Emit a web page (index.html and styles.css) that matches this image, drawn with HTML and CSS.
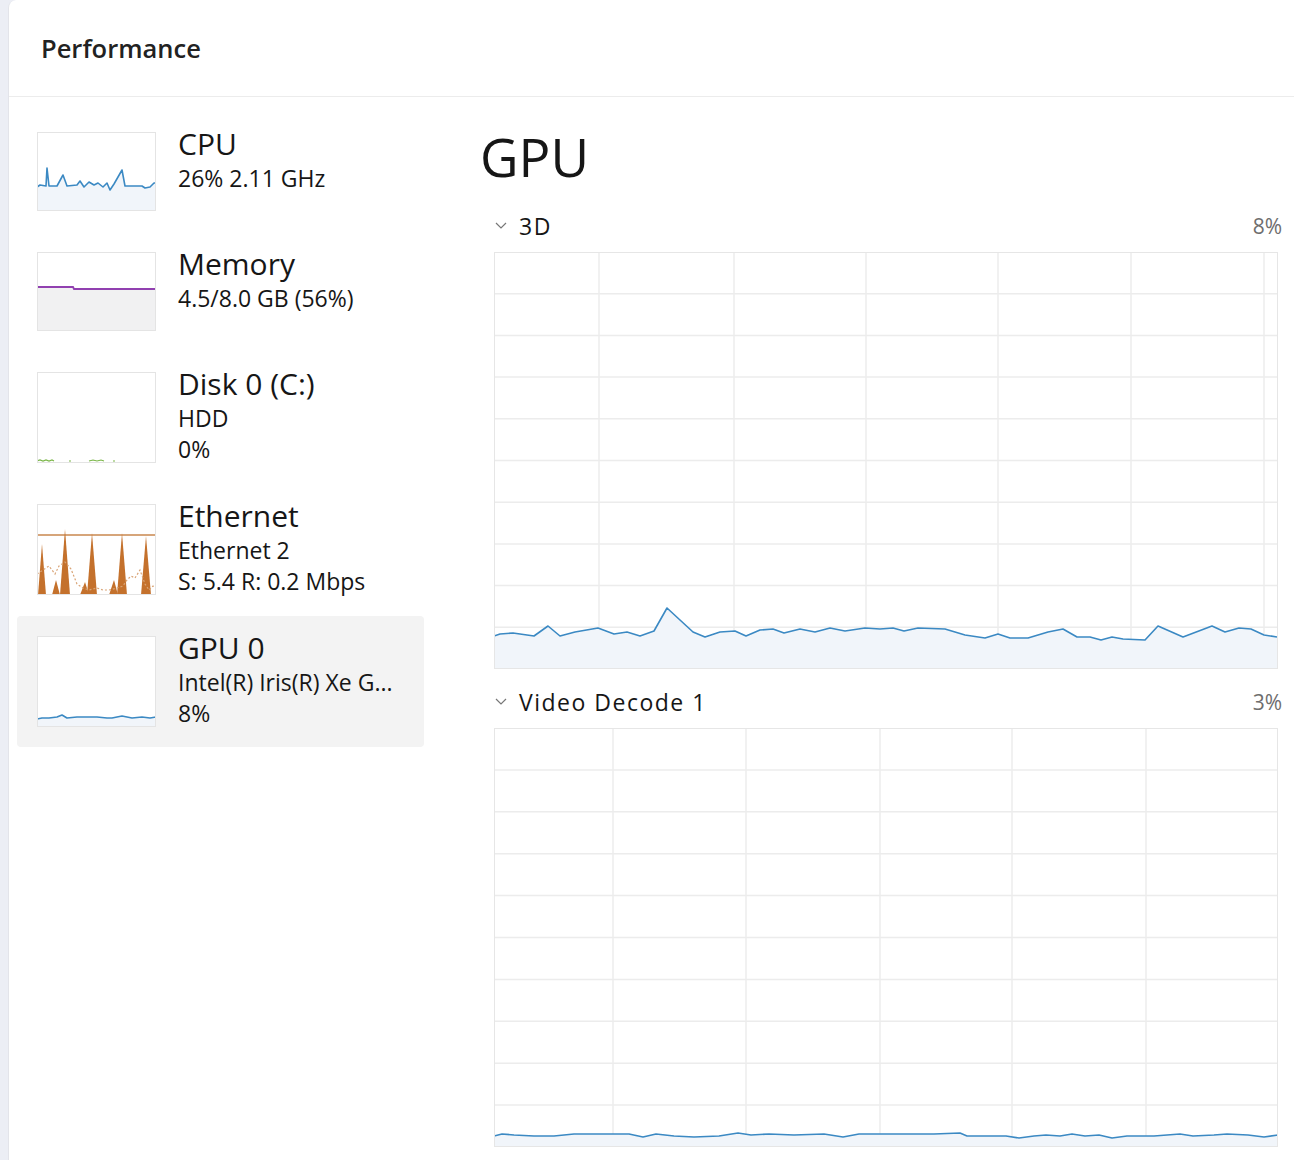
FILE: index.html
```html
<!DOCTYPE html>
<html lang="en">

<head>
    <meta charset="UTF-8">
    <title>Performance</title>
    <link rel="stylesheet" href="styles.css">
</head>

<body>
    <div class="window">
        <div class="header">Performance</div>

        <div class="content">
            <!-- 左侧列表 -->
            <div class="sidebar">
                <div class="item">
                    <svg class="thumb" viewBox="0 0 119 79" width="119" height="79">
                        <polygon class="fill-blue" points="0,79 0,55 3,53 9,54 10,36 12,54 20,54 26,43 30,54 40,53 43,49 47,55 52,50 57,53 61,51 66,55 70,51 73,58 77,52 85,38 88,54 100,54 105,54 108,56 113,55 117,51 119,51 119,79"></polygon>
                        <polyline class="line-blue" points="0,79 0,55 3,53 9,54 10,36 12,54 20,54 26,43 30,54 40,53 43,49 47,55 52,50 57,53 61,51 66,55 70,51 73,58 77,52 85,38 88,54 100,54 105,54 108,56 113,55 117,51 119,51"></polyline>
                    </svg>
                    <div class="info">
                        <div class="name">CPU</div>
                        <div class="detail">26% 2.11 GHz</div>
                    </div>
                </div>

                <div class="item">
                    <svg class="thumb" viewBox="0 0 119 79" width="119" height="79">
                        <polygon class="fill-grey" points="0,79 0,35 36,35 37,37 119,37 119,79"></polygon>
                        <polyline class="line-purple" points="0,79 0,35 36,35 37,37 119,37"></polyline>
                    </svg>
                    <div class="info">
                        <div class="name">Memory</div>
                        <div class="detail">4.5/8.0 GB (56%)</div>
                    </div>
                </div>

                <div class="item">
                    <svg class="thumb tall" viewBox="0 0 119 91" width="119" height="91">
                        <polyline class="line-green" points="0,89 3,88 6,89 9,88 12,89 15,88 17,89"></polyline>
                        <polyline class="line-green" points="32,89 34,89"></polyline>
                        <polyline class="line-green" points="52,89 56,88 60,89 64,88 67,89"></polyline>
                        <polyline class="line-green" points="76,89 78,89"></polyline>
                    </svg>
                    <div class="info">
                        <div class="name">Disk 0 (C:)</div>
                        <div class="detail">HDD</div>
                        <div class="detail">0%</div>
                    </div>
                </div>

                <div class="item">
                    <svg class="thumb tall" viewBox="0 0 119 91" width="119" height="91">
                        <line class="line-orange" x1="0" y1="31" x2="119" y2="31"></line>
                        <polygon class="fill-orange" points="1,91 5,40 9,91"></polygon>
                        <polygon class="fill-orange" points="15,91 19,76 23,91"></polygon>
                        <polygon class="fill-orange" points="23,91 28,25 33,91"></polygon>
                        <polygon class="fill-orange" points="43,91 48,78 52,91"></polygon>
                        <polygon class="fill-orange" points="50,91 55,29 60,91"></polygon>
                        <polygon class="fill-orange" points="72,91 77,76 81,91"></polygon>
                        <polygon class="fill-orange" points="80,91 85,29 90,91"></polygon>
                        <polygon class="fill-orange" points="104,91 109,32 114,91"></polygon>
                        <polyline class="line-dots" points="0,70 6,66 12,62 18,70 22,62 28,58 34,65 40,80 46,84 52,86 60,84 66,86 72,86 80,84 86,82 90,76 94,72 98,74 103,66 108,80 112,86 116,82 119,84"></polyline>
                    </svg>
                    <div class="info">
                        <div class="name">Ethernet</div>
                        <div class="detail">Ethernet 2</div>
                        <div class="detail">S: 5.4 R: 0.2 Mbps</div>
                    </div>
                </div>

                <div class="item active">
                    <svg class="thumb tall" viewBox="0 0 119 91" width="119" height="91">
                        <polygon class="fill-blue" points="0,91 0,83 5,82 12,82 20,81 25,79 30,82 40,81 60,81 70,82 75,82 85,80 95,82 105,81 113,82 119,81 119,91"></polygon>
                        <polyline class="line-blue" points="0,91 0,83 5,82 12,82 20,81 25,79 30,82 40,81 60,81 70,82 75,82 85,80 95,82 105,81 113,82 119,81"></polyline>
                    </svg>
                    <div class="info">
                        <div class="name">GPU 0</div>
                        <div class="detail">Intel(R) Iris(R) Xe G...</div>
                        <div class="detail">8%</div>
                    </div>
                </div>
            </div>

            <!-- 右侧图表 -->
            <div class="main">
                <h1 class="title">GPU</h1>

                <div class="section-head">
                    <svg class="chevron" viewBox="0 0 14 10" width="14" height="10">
                        <polyline points="2,2 7,7 12,2"></polyline>
                    </svg>
                    <span class="label">3D</span>
                    <span class="pct">8%</span>
                </div>
                <svg class="chart" viewBox="0 0 784 417" width="784" height="417">
                    <g class="grid">
                        <line x1="0" y1="41.7" x2="784" y2="41.7"></line>
                        <line x1="0" y1="83.4" x2="784" y2="83.4"></line>
                        <line x1="0" y1="125.1" x2="784" y2="125.1"></line>
                        <line x1="0" y1="166.8" x2="784" y2="166.8"></line>
                        <line x1="0" y1="208.5" x2="784" y2="208.5"></line>
                        <line x1="0" y1="250.2" x2="784" y2="250.2"></line>
                        <line x1="0" y1="291.9" x2="784" y2="291.9"></line>
                        <line x1="0" y1="333.6" x2="784" y2="333.6"></line>
                        <line x1="0" y1="375.3" x2="784" y2="375.3"></line>
                        <line x1="105" y1="0" x2="105" y2="417"></line>
                        <line x1="240" y1="0" x2="240" y2="417"></line>
                        <line x1="372" y1="0" x2="372" y2="417"></line>
                        <line x1="504" y1="0" x2="504" y2="417"></line>
                        <line x1="637" y1="0" x2="637" y2="417"></line>
                        <line x1="770" y1="0" x2="770" y2="417"></line>
                    </g>
                    <polygon class="fill-blue" points="0,417 0,384 6,382 19,381 40,384 54,374 66,384 81,380 104,376 120,382 133,380 146,384 160,379 173,356 199,380 211,385 226,380 241,379 252,384 266,378 279,377 290,381 306,377 321,380 336,376 351,379 371,376 386,377 399,376 410,379 424,376 451,377 471,383 491,386 504,382 516,386 534,386 554,380 569,377 583,385 596,385 607,388 618,385 629,387 651,388 664,374 689,385 718,374 731,380 745,376 757,377 770,383 783,385 784,417"></polygon>
                    <polyline class="line-blue" points="0,417 0,384 6,382 19,381 40,384 54,374 66,384 81,380 104,376 120,382 133,380 146,384 160,379 173,356 199,380 211,385 226,380 241,379 252,384 266,378 279,377 290,381 306,377 321,380 336,376 351,379 371,376 386,377 399,376 410,379 424,376 451,377 471,383 491,386 504,382 516,386 534,386 554,380 569,377 583,385 596,385 607,388 618,385 629,387 651,388 664,374 689,385 718,374 731,380 745,376 757,377 770,383 783,385"></polyline>
                    <rect class="frame" x="0.5" y="0.5" width="783" height="416"></rect>
                </svg>

                <div class="section-head">
                    <svg class="chevron" viewBox="0 0 14 10" width="14" height="10">
                        <polyline points="2,2 7,7 12,2"></polyline>
                    </svg>
                    <span class="label">Video Decode 1</span>
                    <span class="pct">3%</span>
                </div>
                <svg class="chart" viewBox="0 0 784 419" width="784" height="419">
                    <g class="grid">
                        <line x1="0" y1="41.9" x2="784" y2="41.9"></line>
                        <line x1="0" y1="83.8" x2="784" y2="83.8"></line>
                        <line x1="0" y1="125.7" x2="784" y2="125.7"></line>
                        <line x1="0" y1="167.6" x2="784" y2="167.6"></line>
                        <line x1="0" y1="209.5" x2="784" y2="209.5"></line>
                        <line x1="0" y1="251.4" x2="784" y2="251.4"></line>
                        <line x1="0" y1="293.3" x2="784" y2="293.3"></line>
                        <line x1="0" y1="335.2" x2="784" y2="335.2"></line>
                        <line x1="0" y1="377.1" x2="784" y2="377.1"></line>
                        <line x1="119" y1="0" x2="119" y2="419"></line>
                        <line x1="252" y1="0" x2="252" y2="419"></line>
                        <line x1="386" y1="0" x2="386" y2="419"></line>
                        <line x1="518" y1="0" x2="518" y2="419"></line>
                        <line x1="652" y1="0" x2="652" y2="419"></line>
                    </g>
                    <polygon class="fill-blue" points="0,419 0,408 8,406 20,407 40,408 60,408 80,406 100,406 135,406 149,409 162,406 180,408 200,409 225,408 244,405 257,407 275,406 300,407 330,406 349,409 365,406 400,406 440,406 466,405 473,408 483,408 512,408 525,410 540,408 552,407 566,408 578,406 591,408 605,407 618,410 633,408 660,408 686,406 699,408 720,407 733,406 754,407 770,409 784,407 784,419"></polygon>
                    <polyline class="line-blue" points="0,419 0,408 8,406 20,407 40,408 60,408 80,406 100,406 135,406 149,409 162,406 180,408 200,409 225,408 244,405 257,407 275,406 300,407 330,406 349,409 365,406 400,406 440,406 466,405 473,408 483,408 512,408 525,410 540,408 552,407 566,408 578,406 591,408 605,407 618,410 633,408 660,408 686,406 699,408 720,407 733,406 754,407 770,409 784,407"></polyline>
                    <rect class="frame" x="0.5" y="0.5" width="783" height="418"></rect>
                </svg>
            </div>
        </div>
    </div>
</body>

</html>
```

FILE: styles.css
```css
body {
    margin: 0;
    background-color: #eceef5;
    font-family: "Open Sans", "Noto Sans", sans-serif;
    color: #161616;
    overflow: hidden;
}

.window {
    margin-left: 8px;
    height: 1160px;
    background-color: #fff;
    border-left: 1px solid #e3e4ea;
    border-top-left-radius: 8px;
}

/* 顶部标题 */
.header {
    height: 96px;
    display: flex;
    align-items: center;
    padding-left: 32px;
    border-bottom: 1px solid #ececec;
    font-size: 25.5px;
    font-weight: 600;
    color: #222;
}

.content {
    display: flex;
}

/* 左侧列表 */
.sidebar {
    width: 407px;
    padding: 15px 0 0 8px;
    display: flex;
    flex-direction: column;
    gap: 1px;
}

.item {
    display: flex;
    align-items: flex-start;
    gap: 22px;
    padding: 20px;
    border-radius: 4px;
}

.item.active {
    background-color: #f3f3f3;
}

.thumb {
    flex: none;
    background-color: #fff;
    outline: 1px solid #e4e4e4;
    outline-offset: -1px;
}

.info {
    margin: -7px 0;
}

.name {
    font-size: 30px;
    line-height: 38px;
}

.detail {
    font-size: 23px;
    line-height: 31px;
}

/* 线条颜色 */
.line-blue {
    fill: none;
    stroke: #3b89c3;
    stroke-width: 1.6;
    stroke-linejoin: round;
}

.fill-blue {
    fill: #f1f5fa;
}

.line-purple {
    fill: none;
    stroke: #9140b0;
    stroke-width: 1.8;
}

.fill-grey {
    fill: #f1f1f2;
}

.line-green {
    fill: none;
    stroke: #7ab648;
    stroke-width: 1.2;
}

.line-orange {
    stroke: #c9874e;
    stroke-width: 1.6;
}

.fill-orange {
    fill: #c4712c;
}

.line-dots {
    fill: none;
    stroke: #d9a476;
    stroke-width: 1.2;
    stroke-dasharray: 2 2;
}

/* 右侧图表 */
.main {
    flex: 1;
    padding: 30px 12px 0 56px;
}

.title {
    margin: 0;
    font-size: 53px;
    font-weight: 400;
    line-height: 60px;
}

.section-head {
    display: flex;
    align-items: center;
    height: 26px;
    margin: 26px 0 13px 14px;
}

.section-head + .chart + .section-head {
    margin-top: 20px;
}

.chevron polyline {
    fill: none;
    stroke: #777;
    stroke-width: 1.2;
}

.label {
    margin-left: 11px;
    font-size: 23px;
    letter-spacing: 1.5px;
}

.pct {
    margin-left: auto;
    font-size: 21px;
    color: #6e6e6e;
}

.chart {
    display: block;
    margin-left: 14px;
}

.grid line {
    stroke: #ececec;
    stroke-width: 1.5;
}

.frame {
    fill: none;
    stroke: #e6e6e6;
    stroke-width: 1;
}
```
